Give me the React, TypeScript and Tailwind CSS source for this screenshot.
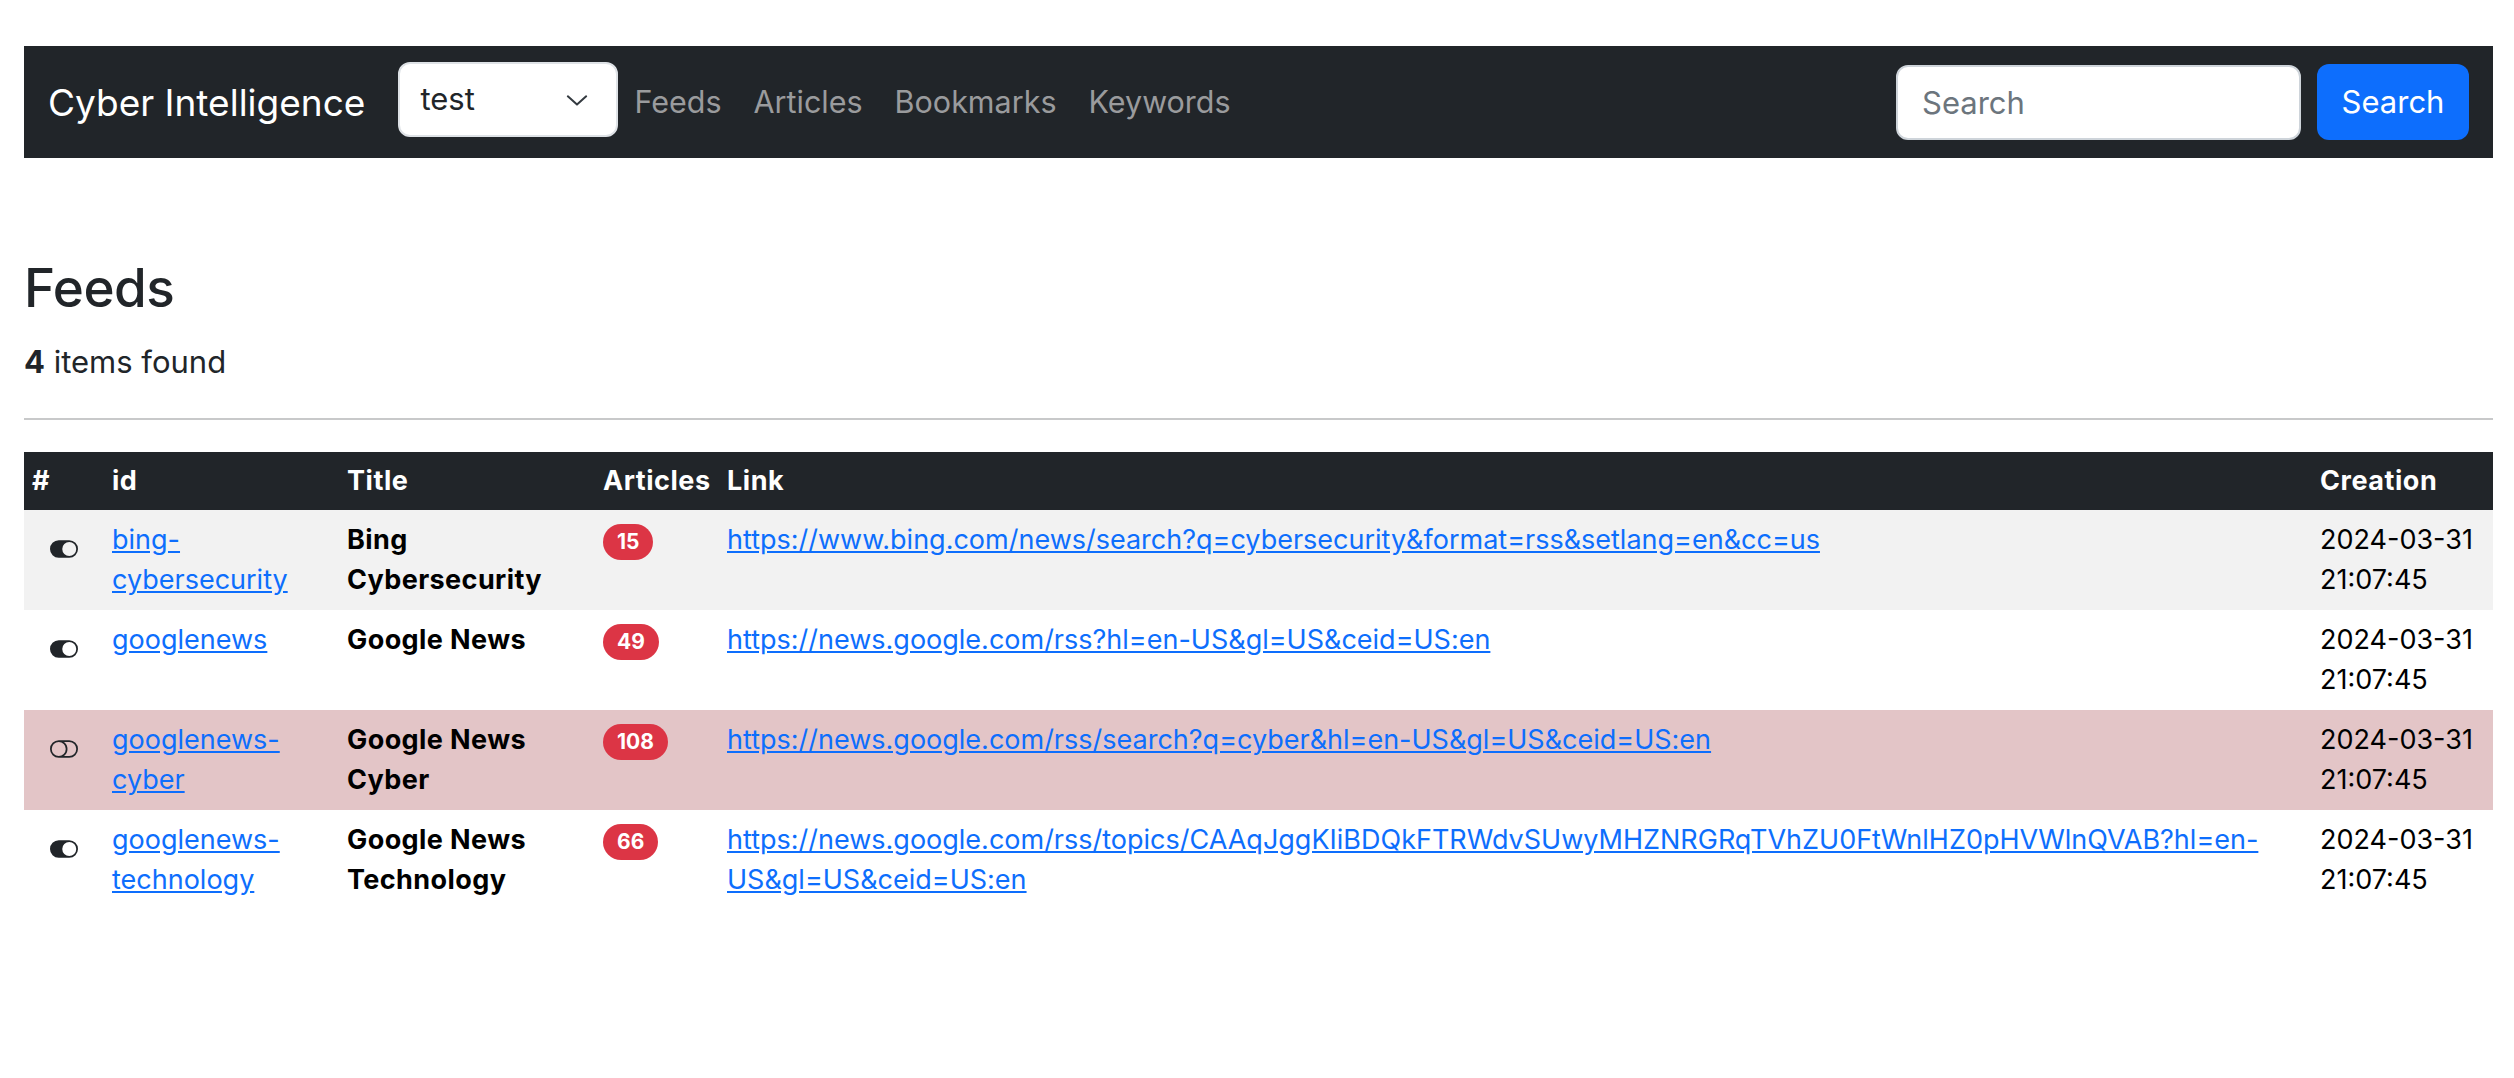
import React from "react";

const ToggleOn = () => (
  <svg viewBox="0 0 16 16" className="mx-auto mt-[15px] block h-[28px] w-[28px]" fill="#212529">
    <path d="M5 3a5 5 0 0 0 0 10h6a5 5 0 0 0 0-10zm6 9a4 4 0 1 1 0-8 4 4 0 0 1 0 8" />
  </svg>
);

const ToggleOff = () => (
  <svg viewBox="0 0 16 16" className="mx-auto mt-[15px] block h-[28px] w-[28px]" fill="#212529">
    <path d="M11 4a4 4 0 0 1 0 8H8a5 5 0 0 0 2-4 5 5 0 0 0-2-4zm-6 8a4 4 0 1 1 0-8 4 4 0 0 1 0 8M0 8a5 5 0 0 0 5 5h6a5 5 0 0 0 0-10H5a5 5 0 0 0-5 5" />
  </svg>
);

type Row = {
  enabled: boolean;
  id: string;
  title: string;
  count: number;
  link: string;
  bg: string;
};

const rows: Row[] = [
  {
    enabled: true,
    id: "bing-cybersecurity",
    title: "Bing Cybersecurity",
    count: 15,
    link: "https://www.bing.com/news/search?q=cybersecurity&format=rss&setlang=en&cc=us",
    bg: "bg-[#f2f2f2]",
  },
  {
    enabled: true,
    id: "googlenews",
    title: "Google News",
    count: 49,
    link: "https://news.google.com/rss?hl=en-US&gl=US&ceid=US:en",
    bg: "bg-white",
  },
  {
    enabled: false,
    id: "googlenews-cyber",
    title: "Google News Cyber",
    count: 108,
    link: "https://news.google.com/rss/search?q=cyber&hl=en-US&gl=US&ceid=US:en",
    bg: "bg-[#e3c5c7]",
  },
  {
    enabled: true,
    id: "googlenews-technology",
    title: "Google News Technology",
    count: 66,
    link: "https://news.google.com/rss/topics/CAAqJggKIiBDQkFTRWdvSUwyMHZNRGRqTVhZU0FtWnlHZ0pHVWlnQVAB?hl=en-US&gl=US&ceid=US:en",
    bg: "bg-white",
  },
];

export default function App() {
  return (
    <div className="min-h-screen bg-white pb-[60px] pl-[24px] pr-[21px] pt-[46px] font-[Inter,sans-serif] text-[#212529]">
      <nav className="flex h-[112px] items-center bg-[#212529] pl-[24px] pr-[24px]">
        <a className="mr-[33px] text-[37px] leading-none text-white">Cyber Intelligence</a>
        <div className="-mt-[5px] flex h-[75px] w-[220px] items-center justify-between rounded-[12px] border-2 border-[#dee2e6] bg-white pl-[20px] pr-[28px]">
          <span className="text-[31px] text-[#212529]">test</span>
          <svg viewBox="0 0 24 12" className="h-[12px] w-[22px]" fill="none" stroke="#343a40" strokeWidth="2.2" strokeLinecap="round" strokeLinejoin="round">
            <path d="M2 2l10 9 10-9" />
          </svg>
        </div>
        <div className="flex items-center">
          {["Feeds", "Articles", "Bookmarks", "Keywords"].map((l) => (
            <a key={l} className="px-[16px] text-[30.5px] text-[#9a9b9d]">
              {l}
            </a>
          ))}
        </div>
        <div className="flex-1" />
        <div className="flex items-center">
          <input
            placeholder="Search"
            className="h-[75px] w-[405px] rounded-[12px] border-2 border-[#ced4da] bg-white px-[24px] text-[31px] text-[#212529] outline-none placeholder:text-[#6c757d]"
          />
          <button className="ml-[16px] h-[76px] w-[152px] rounded-[12px] bg-[#0d6efd] text-[31px] text-white">
            Search
          </button>
        </div>
      </nav>

      <h3 className="mt-[97px] text-[53px] font-medium leading-[67px] tracking-[-0.01em] text-[#212529]">Feeds</h3>
      <p className="mt-[16px] text-[31px] leading-[48px] text-[#212529]">
        <b className="font-bold">4</b> items found
      </p>
      <hr className="mb-[32px] mt-[32px] border-0 border-t-2 border-[#c8c9ca]" />

      <table className="w-full table-fixed border-collapse text-left text-[27px] leading-[40px]">
        <thead>
          <tr className="bg-[#212529] text-white">
            <th className="w-[80px] px-[8px] py-[9px] font-bold tracking-[0.02em]">#</th>
            <th className="w-[235px] px-[8px] py-[9px] font-bold tracking-[0.02em]">id</th>
            <th className="w-[256px] px-[8px] py-[9px] font-bold tracking-[0.02em]">Title</th>
            <th className="w-[124px] px-[8px] py-[9px] font-bold tracking-[0.02em]">Articles</th>
            <th className="px-[8px] py-[9px] font-bold tracking-[0.02em]">Link</th>
            <th className="w-[181px] px-[8px] py-[9px] font-bold tracking-[0.02em]">Creation</th>
          </tr>
        </thead>
        <tbody className="text-black">
          {rows.map((r) => (
            <tr key={r.id} className={r.bg}>
              <td className="px-[8px] py-[10px] align-top">{r.enabled ? <ToggleOn /> : <ToggleOff />}</td>
              <td className="px-[8px] py-[10px] align-top">
                <a className="text-[#0d6efd] underline">{r.id}</a>
              </td>
              <td className="px-[8px] py-[10px] align-top font-bold tracking-[0.015em]">{r.title}</td>
              <td className="px-[8px] py-[10px] align-top">
                <span className="inline-block rounded-full bg-[#dc3545] px-[14px] py-[8px] text-[21px] font-bold leading-[20px] text-white">
                  {r.count}
                </span>
              </td>
              <td className="px-[8px] py-[10px] align-top">
                <a className="text-[#0d6efd] underline">{r.link}</a>
              </td>
              <td className="px-[8px] py-[10px] align-top">2024-03-31 21:07:45</td>
            </tr>
          ))}
        </tbody>
      </table>
    </div>
  );
}
